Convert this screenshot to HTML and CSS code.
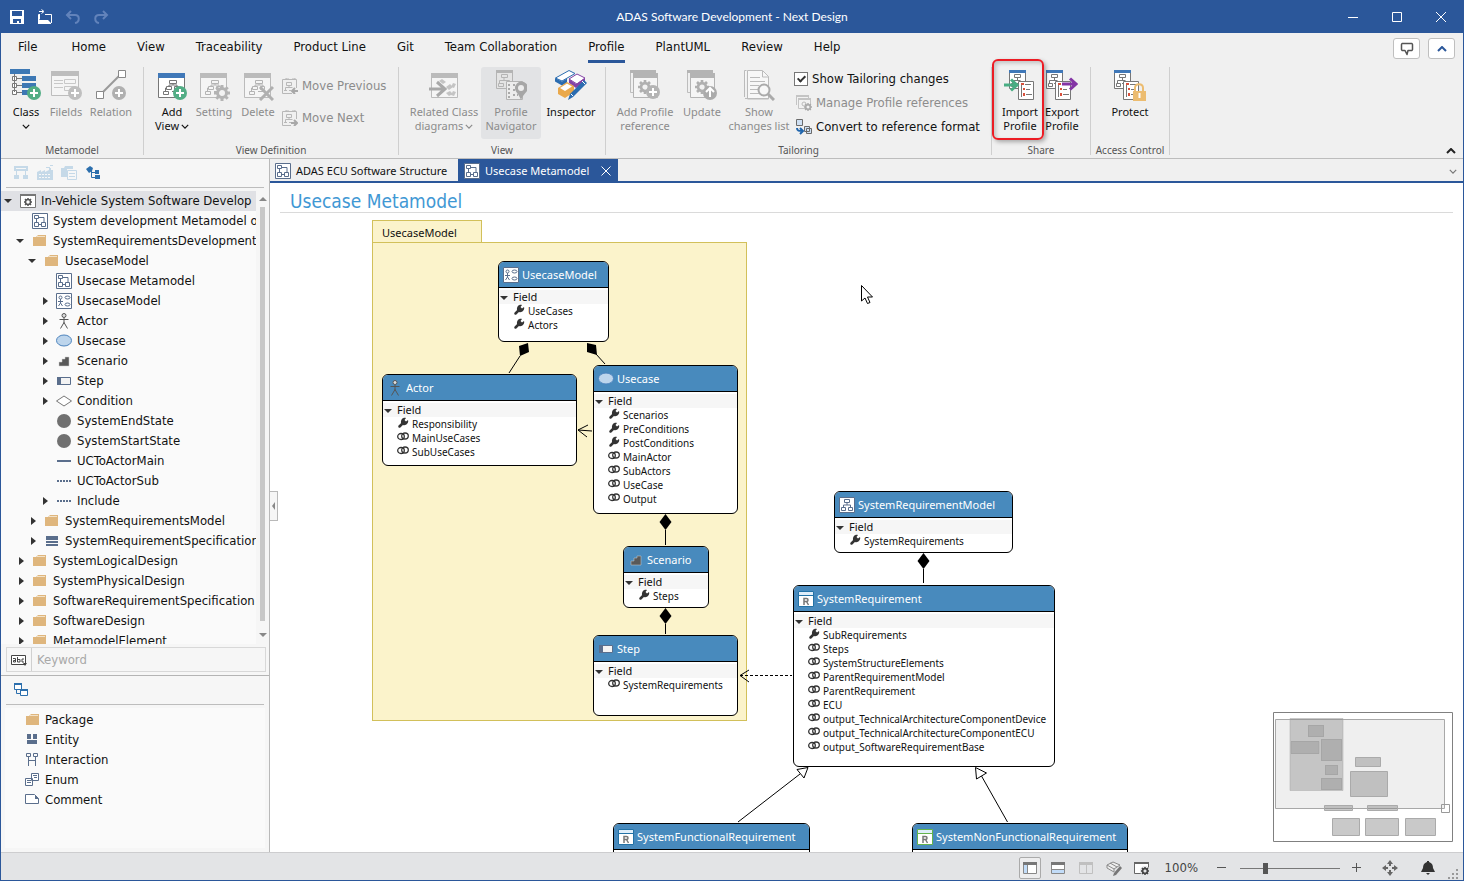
FILE: index.html
```html
<!DOCTYPE html>
<html lang="en">
<head>
<meta charset="utf-8">
<title>ADAS Software Development - Next Design</title>
<link rel="stylesheet" href="styles.css">
</head>
<body>
<svg class="defs" aria-hidden="true">
	<symbol id="save" viewBox="0 0 16 16"><path fill="#fff" fill-rule="evenodd" d="M1 1h14v14H1zM3 2v5h10V2zM4 10v4h4v-2h2v2h2v-4z"/></symbol>
	<symbol id="open" viewBox="0 0 16 16"><path fill="none" stroke="#fff" d="M1.500 6V5.500H3M8 5.500h6.500V14M2 2.500h4M4.500.500l2.500 2-2.500 2"/><path fill="#fff" d="M1 14V9l2 2h8l3 3v1H1zM1 6h2v4H1z"/></symbol>
	<symbol id="undo" viewBox="0 0 16 16"><path fill="none" stroke="#6283bb" stroke-width="2" d="M6 2L2 6l4 4M2 6h8c5 0 5 7 0 8"/></symbol>
	<symbol id="redo" viewBox="0 0 16 16"><path fill="none" stroke="#6283bb" stroke-width="2" d="M10 2l4 4-4 4M14 6H6C1 6 1 13 6 14"/></symbol>
	<symbol id="plus" viewBox="0 0 14 14"><circle cx="7" cy="7" r="7" fill="currentColor"/><path stroke="#fff" stroke-width="2" d="M7 3v8M3 7h8"/></symbol>
	<symbol id="chart" viewBox="0 0 20 16"><path fill="none" stroke="currentColor" d="M8.500 1.500h7v3h-7zM5.500 7.500h5v3h-5zM13.500 7.500h4v3h-4zM2.500 12.500h5v3h-5zM12 4.500V6M8 7.500V6h8v1.500M4.500 12V9H5M11 12.500h6"/></symbol>
	<symbol id="class" viewBox="0 0 32 32"><path fill="#3d78b4" d="M0 0h20v5H0zM12 7h14v5H12zM12 14h14v5H12zM12 21h8v5h-8z"/><path fill="#fff" stroke="#777" d="M4.500 5v18M2.500 7.500h4v4h-4zM2.500 14.500h4v4h-4zM2.500 21.500h4v4h-4zM7 9.500h5M7 16.500h5M7 23.500h5"/><g color="#52ad85"><use href="#plus" x="17" y="17" width="14" height="14"/></g></symbol>
	<symbol id="fields" viewBox="0 0 32 32"><path fill="#f5f5f5" stroke="#bdbdbd" d="M1.500 2.500h27v24h-27z"/><path fill="#bdbdbd" d="M1 2h28v5H1z"/><path fill="none" stroke="#c8c8c8" d="M4 11.500h9M4 18.500h9M4 14.500h9M14.500 10.500h11v4h-11zM14.500 17.500h11v4h-11z"/><g color="#bfbfbf"><use href="#plus" x="18" y="17" width="14" height="14"/></g></symbol>
	<symbol id="relation" viewBox="0 0 32 32"><path stroke="#999" stroke-width="2" d="M5 26L27 4"/><path fill="#fff" stroke="#888" d="M1.500 22.500h7v7h-7zM23.500 1.500h7v7h-7z"/><g color="#b0b0b0"><use href="#plus" x="17" y="17" width="14" height="14"/></g></symbol>
	<symbol id="addview" viewBox="0 0 32 32"><path fill="#fff" stroke="#777" d="M2.500 4.500h26v24h-26z"/><path fill="#4078b8" d="M2 4h27v5H2z"/><g color="#777"><use href="#chart" x="5" y="10" width="20" height="16"/></g><g color="#52ad85"><use href="#plus" x="17" y="17" width="14" height="14"/></g></symbol>
	<symbol id="gear" viewBox="0 0 16 16"><path fill="none" stroke="currentColor" stroke-width="3" d="M8 0v16M0 8h16M2.300 2.300l11.400 11.400M13.700 2.300L2.300 13.700"/><circle cx="8" cy="8" r="4.500" fill="#f2f2f2" stroke="currentColor" stroke-width="3"/></symbol>
	<symbol id="setting" viewBox="0 0 32 32"><path fill="#f5f5f5" stroke="#bbb" d="M2.500 4.500h26v24h-26z"/><path fill="#bbb" d="M2 4h27v5H2z"/><g color="#b4b4b4"><use href="#chart" x="5" y="10" width="20" height="16"/><use href="#gear" x="16" y="16" width="16" height="16"/></g></symbol>
	<symbol id="delete" viewBox="0 0 32 32"><path fill="#f5f5f5" stroke="#bbb" d="M2.500 4.500h26v24h-26z"/><path fill="#bbb" d="M2 4h27v5H2z"/><g color="#b4b4b4"><use href="#chart" x="5" y="10" width="20" height="16"/></g><path stroke="#b0b0b0" stroke-width="3" d="M18 18l13 13M31 18L18 31"/></symbol>
	<symbol id="moveprev" viewBox="0 0 16 16"><path fill="none" stroke="#b8b8b8" d="M10 15.500H.500v-14h14V10M4.500 4.500h5v3h-5zM7 7.500v2M3.500 12v-2.500h7M2 12.500h3M7 12.500h2M4 1V0h3M10 0h3v2"/><path fill="none" stroke="#a8a8a8" stroke-width="2" d="M16 13h-5M13 10l-3 3 3 3"/></symbol>
	<symbol id="movenext" viewBox="0 0 16 16"><path fill="none" stroke="#b8b8b8" d="M9 15.500H.500v-14h14V9M4.500 4.500h5v3h-5zM7 7.500v2M3.500 12v-2.500h7M2 12.500h3M7 12.500h2M4 1V0h3M10 0h3v2"/><path fill="none" stroke="#a8a8a8" stroke-width="2" d="M9 13h5M12 10l3 3-3 3"/></symbol>
	<symbol id="related" viewBox="0 0 32 32"><path fill="#f5f5f5" stroke="#bbb" d="M3.500 4.500h26v24h-26z"/><path fill="#bbb" d="M3 4h27v5H3z"/><path fill="none" stroke="#a9a9a9" stroke-width="3" d="M1 20h15M9 13l8 7-8 7"/><path fill="#c4c4c4" d="M11 12l3-2 4 3-3 2zM18 18l4-3 3 3-4 3zM23 18l2-4 3 1-2 4zM18 24l4-2 3 3-4 2zM23 26l2-4 3 1-2 4z"/></symbol>
	<symbol id="navigator" viewBox="0 0 32 32"><path fill="#e4e4e4" stroke="#b4b4b4" d="M1.500 1.500h16v18h-16z"/><path fill="#b4b4b4" d="M1 1h17v3H1z"/><path fill="none" stroke="#b4b4b4" d="M6.500 5.500h6v3h-6zM9 9v3M4.500 15v-3.500h10V15M3.500 14.500h5v3h-5zM12 14.500h5"/><path fill="#ececec" stroke="#b4b4b4" d="M11.500 12.500h16v18h-16z"/><path stroke="#aaa" stroke-width="2" stroke-dasharray="2 2" d="M14 15v14M18 16h5M18 21h4M18 26h5"/><path fill="#a6a6a6" d="M26 31c-2-6-6-8-6-12a6 6 0 0 1 13 0c0 4-5 6-7 12z"/><circle cx="26" cy="19" r="3" fill="#ececec"/></symbol>
	<symbol id="inspector" viewBox="0 0 32 32"><path fill="#fff" stroke="#2b6cb0" d="M.500 9L14 1.500l6 3L7 12z"/><path fill="#2b6cb0" d="M0 9l7 3.500 5-3v4l-5 3-7-4z"/><path fill="#fff" stroke="#8442a6" d="M14 10l8-5 8 4-8 6z"/><path fill="#8442a6" d="M14 10l7 5v4l-7-5zM21 15l9-6v4l-9 6z"/><path fill="#eaa94c" d="M3 19l9-6 7 4v6l-9 6-7-4z"/><path fill="#fff" d="M5 19l7-4.500 5 3-7 4.500z"/><path fill="#2b6cb0" d="M29 11l3 3-14 14-5 3 2-6z"/><path stroke="#fff" d="M16 25l2 2M27 12l3 3"/></symbol>
	<symbol id="profref" viewBox="0 0 32 32"><path fill="#f0f0f0" stroke="#bdbdbd" d="M1.500 1.500h25v22h-25z"/><path fill="#f5f5f5" stroke="#b4b4b4" d="M4.500 4.500h24v24h-24z"/><path fill="#b4b4b4" d="M1 1h26v3H1zM4 4h25v5H4z"/><g color="#b0b0b0"><use href="#gear" x="9" y="11" width="14" height="14"/></g></symbol>
	<symbol id="addref" viewBox="0 0 32 32"><use href="#profref"/><g color="#b4b4b4"><use href="#plus" x="17" y="16" width="14" height="14"/></g></symbol>
	<symbol id="update" viewBox="0 0 32 32"><use href="#profref"/><circle cx="24" cy="24" r="7" fill="#ababab"/><path fill="none" stroke="#fff" stroke-width="2" d="M24 28v-8M20 23l4-4 4 4"/></symbol>
	<symbol id="changes" viewBox="0 0 32 32"><path fill="#f7f7f7" stroke="#bbb" d="M1.500 28V1.500h2M4.500 1.500h15l6 6V30h-21z"/><path fill="none" stroke="#bbb" d="M19.500 2v6h6M7 8.500h10M7 12.500h15M7 16.500h9M7 20.500h9M7 24.500h9M2 29.500h24"/><circle cx="21" cy="21" r="5.500" fill="#f7f7f7" stroke="#aaa" stroke-width="2"/><path stroke="#aaa" stroke-width="3" d="M25 25l6 6"/></symbol>
	<symbol id="manage" viewBox="0 0 16 16"><path fill="#f2f2f2" stroke="#c4c4c4" d="M.500 10V.500h12V3M2.500 3.500h12v10h-12z"/><path fill="#c4c4c4" d="M0 0h13v2H0zM2 3h13v2H2z"/><circle cx="8" cy="9" r="2" fill="none" stroke="#bbb"/><g color="#aaa"><use href="#gear" x="8" y="8" width="8" height="8"/></g></symbol>
	<symbol id="convert" viewBox="0 0 16 16"><path fill="#cfe0f3" stroke="#6b6b6b" d="M.500.500h6v6h-6zM8.500 7.500h5v5h-5zM10.500 9.500h5v5h-5z"/><path fill="none" stroke="#1f65ad" stroke-width="2" d="M1 9c0 3 2 3 5 3M4 9l3 3-3 3"/></symbol>
	<symbol id="profile" viewBox="0 0 32 32"><g fill="none" stroke="#777"><path fill="#fff" d="M5.500 1.500h16v18h-16z"/><path d="M10.500 5.500h6v3h-6zM13.500 9v3M8.500 15v-3.500h8M7.500 14.500h4v3h-4zM13 14.500h2"/><path fill="#fff" d="M14.500 12.500h15v18h-15z"/><path d="M21 15.500h6M22 20.500h4M22 25.500h6M17.500 14v14"/></g><path fill="#4078b8" d="M5 1h17v3H5z"/><path fill="#d9513c" d="M17 14h3v2h-3zM19 19h2v2h-2zM19 24h2v3h-2z"/></symbol>
	<symbol id="import" viewBox="0 0 32 32"><use href="#profile"/><path fill="none" stroke="#49ad83" stroke-width="3" d="M0 16h12M7 10.500l6 5.500-6 5.500"/></symbol>
	<symbol id="export" viewBox="0 0 32 32"><use href="#profile" x="-5"/><path fill="none" stroke="#8334a5" stroke-width="3" d="M16 15h13M24 9.500l6 5.500-6 5.500"/></symbol>
	<symbol id="protect" viewBox="0 0 32 32"><use href="#profile" x="-5"/><path fill="none" stroke="#ecbc70" stroke-width="2" d="M21 23v-4c0-5 8-5 8 0v4"/><path fill="#ecbc70" d="M19 22h13v10H19z"/><path stroke="#fff" stroke-width="2" d="M25.500 24v5"/></symbol>
	<symbol id="down" viewBox="0 0 10 6"><path fill="none" stroke="currentColor" stroke-width="1.500" d="M1 1l4 4 4-4"/></symbol>
	<symbol id="up" viewBox="0 0 10 6"><path fill="none" stroke="currentColor" stroke-width="2" d="M1 5l4-4 4 4"/></symbol>
	<symbol id="talk" viewBox="0 0 14 14"><path fill="#fff" stroke="#555" stroke-width="1.500" stroke-linejoin="round" d="M2 1.500h10l.5 1v5l-.5 1H8l-1 4-2-4H2l-.5-1v-5z"/></symbol>
	<symbol id="diagram" viewBox="0 0 16 16"><path fill="#fff" stroke="#5a6e8c" d="M.500.500h15v15H.500z"/><path fill="none" stroke="#5a6e8c" d="M2.500 2.500h4v3h-4zM2.500 9.500h4v4h-4zM9.500 9.500h4v4h-4zM4.500 6v4M7 4.500h5v5M7 11.500h3"/></symbol>
	<symbol id="ucmodel" viewBox="0 0 16 16"><path fill="#fff" stroke="#5a6e8c" d="M.500.500h15v15H.500z"/><g fill="none" stroke="#5a6e8c"><circle cx="4.500" cy="4.500" r="1.500"/><path d="M2 8.500h5M4.500 6v4M2.500 13l2-3 2 3"/><ellipse cx="11.500" cy="4.500" rx="2.500" ry="1.500"/><ellipse cx="11.500" cy="11.500" rx="2.500" ry="1.500"/></g></symbol>
	<symbol id="reqmodel" viewBox="0 0 16 16"><path fill="#fff" stroke="#5a6e8c" d="M.500.500h15v15H.500z"/><path fill="none" stroke="#5a6e8c" d="M5.500 2.500h5v3h-5zM2.500 10.500h4v3h-4zM9.500 10.500h4v3h-4zM8 6v2M4.500 10V8h7v2"/></symbol>
	<symbol id="project" viewBox="0 0 16 16"><path fill="#fff" stroke="#777" d="M.500 1.500h15v13H.500z"/><path fill="#777" d="M0 1h16v2H0z"/><circle cx="8" cy="9" r="2.500" fill="none" stroke="#555" stroke-width="1.500"/><path stroke="#555" stroke-width="1.500" d="M8 5v2M8 11v2M4 9h2M10 9h2M5 6l1 1M10 11l1 1M11 6l-1 1M6 11l-1 1"/></symbol>
	<symbol id="folder" viewBox="0 0 16 16"><path fill="#dfb67d" d="M1 4h3l2-2h8v11H1z"/><path stroke="#f3e2c8" d="M5 3.500h8"/></symbol>
	<symbol id="actor" viewBox="0 0 16 16"><g fill="none" stroke="#555"><circle cx="8" cy="2.500" r="2" fill="#ddd"/><path d="M3.500 6.500h9M8 5v5M4.500 15.500L8 9.500l3.500 6"/></g></symbol>
	<symbol id="usecase" viewBox="0 0 16 16"><ellipse cx="8" cy="7.500" rx="7.500" ry="5.500" fill="#bdd5ec" stroke="#4c83bd"/></symbol>
	<symbol id="scenario" viewBox="0 0 16 16"><path fill="#595959" stroke="#ccc" stroke-width=".5" d="M3 13V9h3V6h3V4h4v9z"/></symbol>
	<symbol id="step" viewBox="0 0 16 16"><path fill="#f3f3f3" stroke="#5a6e8c" d="M1.500 4.500h13v7h-13z"/><path fill="#5a6e8c" d="M1 4h4v8H1z"/></symbol>
	<symbol id="condition" viewBox="0 0 16 16"><path fill="#fff" stroke="#777" d="M.500 8L8 3l7.500 5L8 13z"/></symbol>
	<symbol id="state" viewBox="0 0 16 16"><circle cx="8" cy="8" r="7" fill="#707070"/></symbol>
	<symbol id="line" viewBox="0 0 16 16"><path stroke="#5a6e8c" stroke-width="2" d="M1 8h14"/></symbol>
	<symbol id="dots" viewBox="0 0 16 16"><path stroke="#5a6e8c" stroke-width="2" stroke-dasharray="2 1" d="M1 8h14"/></symbol>
	<symbol id="spec" viewBox="0 0 16 16"><path fill="#5a6e8c" d="M2 3h12v4H2zM2 8h12v2H2zM2 11h12v2H2z"/></symbol>
	<symbol id="entity" viewBox="0 0 16 16"><path fill="#5a6e8c" d="M2 2h4v5H2zM8 2h4v5H8zM2 8h10v4H2z"/></symbol>
	<symbol id="interaction" viewBox="0 0 16 16"><path fill="none" stroke="#5a6e8c" d="M1.500 1.500h4v3h-4zM8.500 1.500h4v3h-4zM3.500 5v9M10.500 5v9M4 8.500h6"/></symbol>
	<symbol id="enum" viewBox="0 0 16 16"><path fill="#fff" stroke="#5a6e8c" d="M6.500 1.500h7v7h-7zM.500 6.500h7v7h-7z"/><path stroke="#5a6e8c" d="M8 3.500h4M9 5.500h3M2 8.500h4M2 10.500h4"/></symbol>
	<symbol id="comment" viewBox="0 0 16 16"><path fill="#fff" stroke="#5a6e8c" d="M.500 2.500h9l4 4v5H.500z"/><path fill="#5a6e8c" d="M10 3v4h4z"/></symbol>
	<symbol id="abc" viewBox="0 0 16 16"><path fill="#fff" stroke="#444" d="M.500 3.500h14v9H.500z"/><g fill="none" stroke="#444"><path d="M2 6.500h2.500v3.500H2.500V8.500h2M6.500 5v5H9V7.500H7M13 7h-2v3h2"/></g><path fill="#444" d="M12 11h4l-2 3z"/></symbol>
	<symbol id="req" viewBox="0 0 16 16"><path fill="#fff" stroke="currentColor" d="M.500.500h15v15H.500z"/><path fill="#dfeefa" d="M1 1h14v3H1z"/><path stroke="currentColor" d="M0 4.500h16"/><path fill="none" stroke="#777" stroke-width="1.500" d="M6 14V7.500h2.500c2 0 2 3 0 3H6M8.500 10.500l2 3.500"/></symbol>
	<symbol id="wrench" viewBox="0 0 12 12"><path stroke="#333" stroke-width="2.500" stroke-linecap="round" d="M2.500 9.500l4-4"/><path fill="#333" d="M4 6C3.500 2.500 6 0 9 1L7.500 3 9 4.500 11 3c1 3-2 6-5 5z"/></symbol>
	<symbol id="link" viewBox="0 0 12 12"><g fill="none" stroke="#333" stroke-width="1.300"><ellipse cx="4" cy="5.500" rx="3.300" ry="3"/><ellipse cx="8" cy="5" rx="3.300" ry="3"/></g></symbol>
	<symbol id="t-model" viewBox="0 0 16 16"><path fill="#c5d9e8" d="M1 1h14v5H1zM1 10h5v4H1zM10 10h5v4h-5z"/><path fill="#f7f7f7" d="M3 3h10v1H3z"/><path stroke="#c5d9e8" d="M3.500 6v4M12.500 6v4"/></symbol>
	<symbol id="t-factory" viewBox="0 0 16 16"><path fill="#c5d9e8" d="M0 15V7l4-2v2l4-2v2l4-2V3h2v2h2v10zM9 2h4v1H9zM13 0h3v1h-3z"/><path stroke="#f7f7f7" stroke-dasharray="2 1" d="M2 9.500h12M2 12.500h12"/></symbol>
	<symbol id="t-copy" viewBox="0 0 16 16"><path fill="#c5d9e8" d="M0 3h3l1-2h8v3H6v8H0z"/><path fill="#f7f7f7" stroke="#c5d9e8" d="M6.500 5.500h9v9h-9zM8 8.500h6M8 11.500h6"/></symbol>
	<symbol id="t-tree" viewBox="0 0 16 16"><path fill="#2c6fad" d="M1 4l4-3 3 2-1 3-3 2zM10 5h4v4h-4zM10 10h5v4h-5z"/><path fill="none" stroke="#2c6fad" d="M6.500 5v7.500H11M7 7.500h4"/></symbol>
	<symbol id="t-link" viewBox="0 0 16 16"><path fill="#fff" stroke="#2c6fad" d="M1.500 1.500h7v6h-7zM7.500 7.500h7v6h-7z"/><path fill="none" stroke="#2c6fad" d="M3.500 8v3.500h4"/><path fill="#2c6fad" d="M1 1h8v2H1zM7 7h8v2H7z"/></symbol>
</svg>
<div class="window">
	<header class="titlebar">
		<div class="quick">
			<button aria-label="Save"><svg class="i16"><use href="#save"/></svg></button>
			<button aria-label="Open"><svg class="i16"><use href="#open"/></svg></button>
			<button aria-label="Undo" disabled><svg class="i16"><use href="#undo"/></svg></button>
			<button aria-label="Redo" disabled><svg class="i16"><use href="#redo"/></svg></button>
		</div>
		<h1>ADAS Software Development - Next Design</h1>
		<div class="winbtns">
			<button aria-label="Minimize"><svg width="12" height="12"><path stroke="#fff" d="M1 6.500h10"/></svg></button>
			<button aria-label="Maximize"><svg width="12" height="12"><path fill="none" stroke="#fff" d="M1.500 1.500h9v9h-9z"/></svg></button>
			<button aria-label="Close"><svg width="12" height="12"><path stroke="#fff" d="M1 1l10 10M11 1L1 11"/></svg></button>
		</div>
	</header>

	<nav class="menu">
		<a href="#" class="file">File</a><a href="#">Home</a><a href="#">View</a><a href="#">Traceability</a><a href="#">Product Line</a><a href="#">Git</a><a href="#">Team Collaboration</a><a href="#" class="on">Profile</a><a href="#">PlantUML</a><a href="#">Review</a><a href="#">Help</a>
		<div class="menu-right">
			<button aria-label="Feedback"><svg width="14" height="14"><use href="#talk"/></svg></button>
			<button aria-label="Collapse ribbon"><svg width="10" height="6"><use href="#up"/></svg></button>
		</div>
	</nav>

	<div class="ribbon">
		<section class="group g-meta">
			<div class="tools">
				<button class="tool w40"><svg class="i32"><use href="#class"/></svg>Class<svg class="chev"><use href="#down"/></svg></button>
				<button class="tool w40" disabled><svg class="i32"><use href="#fields"/></svg>Filelds</button>
				<button class="tool w50" disabled><svg class="i32"><use href="#relation"/></svg>Relation</button>
			</div>
			<h2>Metamodel</h2>
		</section>
		<section class="group g-def">
			<div class="tools">
				<button class="tool w40"><svg class="i32"><use href="#addview"/></svg>Add<span>View <svg class="chev"><use href="#down"/></svg></span></button>
				<button class="tool w44" disabled><svg class="i32"><use href="#setting"/></svg>Setting</button>
				<button class="tool w44" disabled><svg class="i32"><use href="#delete"/></svg>Delete</button>
				<div class="stack two">
					<button disabled><svg class="i16"><use href="#moveprev"/></svg>Move Previous</button>
					<button disabled><svg class="i16"><use href="#movenext"/></svg>Move Next</button>
				</div>
			</div>
			<h2>View Definition</h2>
		</section>
		<section class="group g-view">
			<div class="tools">
				<button class="tool w74" disabled><svg class="i32"><use href="#related"/></svg>Related Class<span>diagrams <svg class="chev"><use href="#down"/></svg></span></button>
				<button class="tool w60 pressed" disabled><svg class="i32"><use href="#navigator"/></svg>Profile<span>Navigator</span></button>
				<button class="tool w60"><svg class="i32"><use href="#inspector"/></svg>Inspector</button>
			</div>
			<h2>View</h2>
		</section>
		<section class="group g-tailor">
			<div class="tools">
				<button class="tool w70" disabled><svg class="i32"><use href="#addref"/></svg>Add Profile<span>reference</span></button>
				<button class="tool w44" disabled><svg class="i32"><use href="#update"/></svg>Update</button>
				<button class="tool w70" disabled><svg class="i32"><use href="#changes"/></svg>Show<span>changes list</span></button>
				<div class="stack">
					<label><input type="checkbox" checked>Show Tailoring changes</label>
					<button disabled><svg class="i16"><use href="#manage"/></svg>Manage Profile references</button>
					<button><svg class="i16"><use href="#convert"/></svg>Convert to reference format</button>
				</div>
			</div>
			<h2>Tailoring</h2>
		</section>
		<section class="group g-share">
			<div class="tools">
				<button class="tool w40 marked"><svg class="i32"><use href="#import"/></svg>Import<span>Profile</span></button>
				<button class="tool w40"><svg class="i32"><use href="#export"/></svg>Export<span>Profile</span></button>
			</div>
			<h2>Share</h2>
		</section>
		<section class="group g-access">
			<div class="tools">
				<button class="tool w60"><svg class="i32"><use href="#protect"/></svg>Protect</button>
			</div>
			<h2>Access Control</h2>
		</section>
		<button class="fold" aria-label="Fold ribbon"><svg width="10" height="6"><use href="#up"/></svg></button>
	</div>

	<div class="work">
		<aside class="side">
			<div class="bar">
				<svg class="i16"><use href="#t-model"/></svg><svg class="i16"><use href="#t-factory"/></svg><svg class="i16"><use href="#t-copy"/></svg><svg class="i16"><use href="#t-tree"/></svg>
			</div>
			<div class="treebox">
				<ul class="tree">
					<li class="l0 sel"><i class="open"></i><svg class="i16"><use href="#project"/></svg>In-Vehicle System Software Develop</li>
					<li class="l1"><i></i><svg class="i16"><use href="#diagram"/></svg>System development Metamodel o</li>
					<li class="l1"><i class="open"></i><svg class="i16"><use href="#folder"/></svg>SystemRequirementsDevelopment</li>
					<li class="l2"><i class="open"></i><svg class="i16"><use href="#folder"/></svg>UsecaseModel</li>
					<li class="l3"><i></i><svg class="i16"><use href="#diagram"/></svg>Usecase Metamodel</li>
					<li class="l3"><i class="shut"></i><svg class="i16"><use href="#ucmodel"/></svg>UsecaseModel</li>
					<li class="l3"><i class="shut"></i><svg class="i16"><use href="#actor"/></svg>Actor</li>
					<li class="l3"><i class="shut"></i><svg class="i16"><use href="#usecase"/></svg>Usecase</li>
					<li class="l3"><i class="shut"></i><svg class="i16"><use href="#scenario"/></svg>Scenario</li>
					<li class="l3"><i class="shut"></i><svg class="i16"><use href="#step"/></svg>Step</li>
					<li class="l3"><i class="shut"></i><svg class="i16"><use href="#condition"/></svg>Condition</li>
					<li class="l3"><i></i><svg class="i16"><use href="#state"/></svg>SystemEndState</li>
					<li class="l3"><i></i><svg class="i16"><use href="#state"/></svg>SystemStartState</li>
					<li class="l3"><i></i><svg class="i16"><use href="#line"/></svg>UCToActorMain</li>
					<li class="l3"><i></i><svg class="i16"><use href="#dots"/></svg>UCToActorSub</li>
					<li class="l3"><i class="shut"></i><svg class="i16"><use href="#dots"/></svg>Include</li>
					<li class="l2"><i class="shut"></i><svg class="i16"><use href="#folder"/></svg>SystemRequirementsModel</li>
					<li class="l2"><i class="shut"></i><svg class="i16"><use href="#spec"/></svg>SystemRequirementSpecification</li>
					<li class="l1"><i class="shut"></i><svg class="i16"><use href="#folder"/></svg>SystemLogicalDesign</li>
					<li class="l1"><i class="shut"></i><svg class="i16"><use href="#folder"/></svg>SystemPhysicalDesign</li>
					<li class="l1"><i class="shut"></i><svg class="i16"><use href="#folder"/></svg>SoftwareRequirementSpecification</li>
					<li class="l1"><i class="shut"></i><svg class="i16"><use href="#folder"/></svg>SoftwareDesign</li>
					<li class="l1"><i class="shut"></i><svg class="i16"><use href="#folder"/></svg>MetamodelElement</li>
				</ul>
				<div class="scroll"><i class="s-up"></i><b></b><i class="s-down"></i></div>
			</div>
			<div class="search">
				<svg class="i16"><use href="#abc"/></svg>
				<input type="text" placeholder="Keyword" aria-label="Keyword">
			</div>
			<div class="palette">
				<div class="bar"><svg class="i16"><use href="#t-link"/></svg></div>
				<ul>
					<li><svg class="i16"><use href="#folder"/></svg>Package</li>
					<li><svg class="i16"><use href="#entity"/></svg>Entity</li>
					<li><svg class="i16"><use href="#interaction"/></svg>Interaction</li>
					<li><svg class="i16"><use href="#enum"/></svg>Enum</li>
					<li><svg class="i16"><use href="#comment"/></svg>Comment</li>
				</ul>
			</div>
		</aside>

		<main class="main">
			<div class="tabs">
				<button><svg class="i16"><use href="#diagram"/></svg>ADAS ECU Software Structure</button>
				<button class="on"><svg class="i16"><use href="#diagram"/></svg>Usecase Metamodel<svg class="x" width="10" height="10"><path stroke="#fff" d="M.500.500l9 9M9.500.500l-9 9"/></svg></button>
				<svg class="more"><use href="#down"/></svg>
			</div>
			<h2 class="title">Usecase Metamodel</h2>
			<div class="canvas">
				<div class="pkg-tab">UsecaseModel</div>
				<div class="pkg"></div>

				<svg class="edges">
					<path d="M258 130l-9 3 1 10 9-4zM317 130l9 2 1 10-10-3zM395.500 301l6 8-6 8-6-8zM395.500 395l6 8-6 8-6-8zM653.500 340l6 8-6 8-6-8z"/>
					<g fill="none" stroke="#000">
						<path d="M250 143l-11 17M326 141l9 10M395.500 317v15M395.500 411v10M653.500 356v14"/>
						<path d="M322 218l-14-1M318 212l-10 5 9 7"/>
						<path stroke-dasharray="3 2" d="M470 462.500h52"/><path d="M479 457l-9 5.500 9 6.500"/>
						<path d="M530 561l-62 48M711.500 563l26 46"/>
						<path fill="#fff" d="M538 554.500l-11 2 7 8.500zM705.500 554.500l11 5.500-10 6z"/>
					</g>
				</svg>

				<div class="node n-model">
					<h3><svg class="i16"><use href="#ucmodel"/></svg>UsecaseModel</h3>
					<h4>Field</h4>
					<ul>
						<li><svg class="i12"><use href="#wrench"/></svg>UseCases</li>
						<li><svg class="i12"><use href="#wrench"/></svg>Actors</li>
					</ul>
				</div>
				<div class="node n-actor">
					<h3><svg class="i16"><use href="#actor"/></svg>Actor</h3>
					<h4>Field</h4>
					<ul>
						<li><svg class="i12"><use href="#wrench"/></svg>Responsibility</li>
						<li><svg class="i12"><use href="#link"/></svg>MainUseCases</li>
						<li><svg class="i12"><use href="#link"/></svg>SubUseCases</li>
					</ul>
				</div>
				<div class="node n-usecase">
					<h3><svg class="i16"><use href="#usecase"/></svg>Usecase</h3>
					<h4>Field</h4>
					<ul>
						<li><svg class="i12"><use href="#wrench"/></svg>Scenarios</li>
						<li><svg class="i12"><use href="#wrench"/></svg>PreConditions</li>
						<li><svg class="i12"><use href="#wrench"/></svg>PostConditions</li>
						<li><svg class="i12"><use href="#link"/></svg>MainActor</li>
						<li><svg class="i12"><use href="#link"/></svg>SubActors</li>
						<li><svg class="i12"><use href="#link"/></svg>UseCase</li>
						<li><svg class="i12"><use href="#link"/></svg>Output</li>
					</ul>
				</div>
				<div class="node n-scenario">
					<h3><svg class="i16"><use href="#scenario"/></svg>Scenario</h3>
					<h4>Field</h4>
					<ul>
						<li><svg class="i12"><use href="#wrench"/></svg>Steps</li>
					</ul>
				</div>
				<div class="node n-step">
					<h3><svg class="i16"><use href="#step"/></svg>Step</h3>
					<h4>Field</h4>
					<ul>
						<li><svg class="i12"><use href="#link"/></svg>SystemRequirements</li>
					</ul>
				</div>
				<div class="node n-reqmodel">
					<h3><svg class="i16"><use href="#reqmodel"/></svg>SystemRequirementModel</h3>
					<h4>Field</h4>
					<ul>
						<li><svg class="i12"><use href="#wrench"/></svg>SystemRequirements</li>
					</ul>
				</div>
				<div class="node n-req">
					<h3><svg class="i16 blue"><use href="#req"/></svg>SystemRequirement</h3>
					<h4>Field</h4>
					<ul>
						<li><svg class="i12"><use href="#wrench"/></svg>SubRequirements</li>
						<li><svg class="i12"><use href="#link"/></svg>Steps</li>
						<li><svg class="i12"><use href="#link"/></svg>SystemStructureElements</li>
						<li><svg class="i12"><use href="#link"/></svg>ParentRequirementModel</li>
						<li><svg class="i12"><use href="#link"/></svg>ParentRequirement</li>
						<li><svg class="i12"><use href="#link"/></svg>ECU</li>
						<li><svg class="i12"><use href="#link"/></svg>output_TechnicalArchitectureComponentDevice</li>
						<li><svg class="i12"><use href="#link"/></svg>output_TechnicalArchitectureComponentECU</li>
						<li><svg class="i12"><use href="#link"/></svg>output_SoftwareRequirementBase</li>
					</ul>
				</div>
				<div class="node n-func"><h3><svg class="i16 blue"><use href="#req"/></svg>SystemFunctionalRequirement</h3></div>
				<div class="node n-nonfunc"><h3><svg class="i16 green"><use href="#req"/></svg>SystemNonFunctionalRequirement</h3></div>

				<svg class="cursor" width="12" height="19"><path fill="#fff" stroke="#000" d="M.500.500v15.500l3.500-3 2.500 5.500 2.500-1-2.500-5.500h5z"/></svg>

				<svg class="minimap" width="180" height="130">
					<path fill="#fff" stroke="#808080" d="M.500.500h179v129H.500z"/>
					<path fill="#efefef" stroke="#a8a8a8" d="M2.500 7.500h169v89H2.500z"/>
					<path fill="#888" fill-opacity=".4" stroke="#aaa" stroke-opacity=".5" d="M17 6.500h53v72H17zM35.500 13.500h15v11h-15zM18 29.500h28v12H18zM48.500 27.500h20v21h-20zM52.500 53.500h12v9h-12zM48.500 66.500h20v11h-20z"/>
					<path fill="#888" fill-opacity=".35" d="M35 13h16v12H35zM18 29h28v13H18zM48 27h21v22H48zM52 53h13v10H52zM48 66h21v12H48z"/>
					<path fill="#888" fill-opacity=".45" stroke="#aaa" d="M82.500 45.500h25v9h-25zM77.500 59.500h37v25h-37zM51.500 93.500h28v5h-28zM94.500 93.500h30v5h-30zM59.500 106.500h27v17h-27zM92.500 106.500h33v17h-33zM132.500 106.500h30v17h-30z"/>
					<path fill="none" stroke="#999" d="M168.500 92.500h8v8h-8z"/>
				</svg>
			</div>
			<button class="splitter" aria-label="Hide panel"></button>
		</main>
	</div>

	<footer class="status">
		<button class="pressed" aria-label="Side panel"><svg class="i16"><path fill="#fff" stroke="#888" d="M1.500 2.500h13v11h-13z"/><path fill="#777" d="M1 2h14v3H1z"/><path fill="#c2dcf8" d="M2 5h3v8H2z"/><path stroke="#888" d="M5.500 5v8"/></svg></button>
		<button aria-label="Bottom panel"><svg class="i16"><path fill="#fff" stroke="#888" d="M1.500 2.500h13v11h-13z"/><path fill="#777" d="M1 2h14v3H1z"/><path fill="#c2dcf8" d="M2 10h12v3H2z"/><path stroke="#888" d="M2 9.500h12"/></svg></button>
		<button aria-label="Split" disabled><svg class="i16"><path fill="none" stroke="#c0c0c0" d="M1.500 2.500h13v11h-13zM8.500 3v11"/><path fill="#c0c0c0" d="M1 2h14v3H1z"/></svg></button>
		<button aria-label="Inspector"><svg class="i16"><path fill="#eee" stroke="#8a8a8a" d="M1 5l6-3 7 3-6 4zM1 5v3l7 4V9M4 3l7 4"/><path fill="#777" d="M14 6l2 2-6 7-3 1 1-3z"/></svg></button>
		<button aria-label="Window settings"><svg class="i16"><path fill="#fff" stroke="#666" d="M.500 2.500h14v11H.500z"/><path fill="#666" d="M0 2h15v2H0z"/><circle cx="11" cy="11" r="5" fill="#e3e4e6"/><circle cx="11" cy="11" r="2.500" fill="none" stroke="#444" stroke-width="1.500"/><path stroke="#444" stroke-width="1.500" d="M11 7v2M11 13v2M7 11h2M13 11h2M8 8l2 2M12 12l2 2M14 8l-2 2M10 12l-2 2"/></svg></button>
		<span class="zoom">100%</span>
		<button aria-label="Zoom out"><svg class="i16"><path stroke="#555" d="M3 7.500h9"/></svg></button>
		<input type="range" min="0" max="100" value="24" aria-label="Zoom">
		<button aria-label="Zoom in"><svg class="i16"><path stroke="#555" d="M3 7.500h9M7.500 3v9"/></svg></button>
		<button class="fit" aria-label="Fit"><svg class="i16"><path fill="#666" d="M8 0l3 4H5zM8 16l3-4H5zM0 8l4-3v6zM16 8l-4-3v6z"/><path fill="none" stroke="#666" stroke-width="2" d="M8 3v3M8 10v3M3 8h3M10 8h3"/></svg></button>
		<button class="bell" aria-label="Notifications"><svg class="i16"><path fill="#333" d="M7 1h2v1c3 1 4 3 4 6l2 4H1l2-4c0-3 1-5 4-6zM6 13h4l-2 2z"/></svg></button>
		<svg class="grip" width="12" height="12"><path fill="#999" d="M9 1h2v2H9zM9 5h2v2H9zM5 5h2v2H5zM9 9h2v2H9zM5 9h2v2H5zM1 9h2v2H1z"/></svg>
	</footer>
</div>
</body>
</html>
```
FILE: styles.css
```css
* {margin:0;padding:0;list-style:none;box-sizing:border-box;}
body {font:13px/20px "DejaVu Sans Condensed","DejaVu Sans",sans-serif;color:#111;}
button {font:inherit;color:inherit;background:none;border:0;}
a {color:inherit;text-decoration:none;}
svg {display:block;flex:none;}
.defs {position:absolute;width:0;height:0;}
.i12 {width:12px;height:12px;}
.i16 {width:16px;height:16px;}
.i32 {width:32px;height:32px;}

.window {display:flex;flex-direction:column;height:100vh;border:1px solid #2b579a;border-top:0;background:#f0f0f0;overflow:hidden;}

/* title bar */
.titlebar {display:grid;grid-template-columns:1fr auto 1fr;align-items:center;height:33px;flex:none;background:#2b579a;color:#fff;}
.titlebar h1 {font:12px/20px Lato,sans-serif;}
.quick {display:flex;gap:12px;padding-left:8px;}
.winbtns {display:flex;justify-content:flex-end;}
.winbtns button {display:flex;justify-content:center;width:44px;}

/* menu */
.menu {display:flex;align-items:center;gap:1px;height:31px;flex:none;padding:0 8px 0 2px;}
.menu a {padding:3px 0;margin:0 15px;border-bottom:3px solid transparent;}
.menu a.file {margin-right:18px;}
.menu a.on {border-color:#2b579a;}
.menu-right {display:flex;gap:8px;margin-left:auto;}
.menu-right button {display:flex;align-items:center;justify-content:center;width:27px;height:21px;background:#fff;border:1px solid #bfbfbf;border-radius:3px;color:#2b579a;}

/* ribbon */
.ribbon {position:relative;display:flex;height:95px;flex:none;padding:3px 0;border-bottom:1px solid #bdbdbd;font:11px/14px "Noto Sans",sans-serif;}
.group {display:flex;flex-direction:column;flex:none;border-right:1px solid #cfcfcf;}
.group h2 {margin-top:auto;font-size:10px;line-height:10px;font-weight:400;text-align:center;color:#555;}
.tools {display:flex;height:72px;}
.g-meta {width:143px;}
.g-meta .tools {padding-left:5px;}
.g-def {width:255px;}
.g-def .tools {padding-left:8px;}
.g-view {width:207px;}
.g-view .tools {padding-left:8px;}
.g-tailor {width:386px;}
.g-tailor .tools {padding-left:4px;}
.g-share {width:99px;}
.g-share .tools {padding-left:8px;gap:2px;}
.g-access {width:79px;}
.g-access .tools {padding-left:9px;}
.tool {position:relative;display:flex;flex-direction:column;align-items:center;justify-content:flex-start;height:72px;padding-top:2px;white-space:nowrap;}
.tool .i32 {margin-bottom:4px;}
.tool .chev {margin-top:5px;}
.tool span {display:flex;align-items:center;gap:2px;}
.tool span .chev {margin:0;}
.chev {width:8px;height:5px;}
.w40 {width:40px;}
.w44 {width:44px;}
.w50 {width:50px;}
.w60 {width:60px;}
.w70 {width:70px;}
.w74 {width:74px;}
.ribbon button:disabled {color:#8c8c8c;}
.ribbon .pressed {background:#e2e3e5;border-radius:3px;}
.marked::after {content:"";position:absolute;left:-8px;top:-8px;width:48px;height:77px;border:2px solid #ec1c24;border-radius:6px;box-shadow:2px 2px 4px rgba(0,0,0,.3), inset 2px 2px 4px rgba(0,0,0,.2);z-index:2;}
.stack {display:flex;flex-direction:column;font:13px/24px "DejaVu Sans Condensed","DejaVu Sans",sans-serif;}
.stack button,.stack label {display:flex;align-items:center;gap:4px;white-space:nowrap;}
.stack button {padding-left:2px;}
.stack.two {line-height:32px;padding-top:3px;}
.stack input {appearance:none;width:14px;height:14px;border:1px solid #777;background:#fff;position:relative;}
.stack input:checked::after {content:"";position:absolute;left:4px;top:1px;width:3px;height:6px;border:solid #333;border-width:0 2px 2px 0;transform:rotate(45deg);}
.fold {position:absolute;right:7px;bottom:4px;color:#222;}

/* work area */
.work {display:flex;flex:1;min-height:0;}
.side {display:flex;flex-direction:column;width:269px;flex:none;background:#f6f6f6;border-right:1px solid #b9b9b9;}
.bar {display:flex;align-items:center;gap:8px;height:29px;flex:none;margin:0 5px 3px;padding-left:7px;border-bottom:1px solid #bdbdbd;}
.treebox {display:flex;flex:1;min-height:0;overflow:hidden;}
.tree {flex:1;min-width:0;overflow:hidden;background:#fafafa;}
.tree li {display:flex;align-items:center;height:20px;white-space:nowrap;}
.tree svg {margin:0 5px 0 4px;}
.tree i {width:15px;flex:none;}
.tree i::before {content:"";display:block;width:0;margin-left:3px;border:4px solid transparent;}
.tree i.open::before {border-top-color:#333;border-bottom-width:0;}
.tree i.shut::before {margin-left:6px;border-left:5px solid #333;border-right-width:0;}
.l0.sel {background:#e0e1e5;}
.l1 {padding-left:12px;}
.l2 {padding-left:24px;}
.l3 {padding-left:36px;}
.scroll {display:flex;flex-direction:column;align-items:center;justify-content:space-between;width:13px;padding:6px 0 7px;}
.scroll b {width:5px;flex:1;margin:6px 0 12px;background:#c8c8c8;}
.scroll i {border:4px solid transparent;}
.scroll .s-up {border-top-width:0;border-bottom-color:#888;}
.scroll .s-down {border-bottom-width:0;border-top-color:#888;}
.search {display:flex;align-items:center;height:25px;flex:none;margin:3px 3px 3px 5px;padding-left:4px;border:1px solid #d8d8d8;}
.search input {flex:1;min-width:0;height:23px;margin-left:4px;padding-left:5px;font:inherit;border:0;border-left:1px solid #d0d0d0;background:none;outline:0;}
.search input::placeholder {color:#a8a8a8;opacity:1;}
.palette {height:177px;flex:none;border-top:1px solid #b4b4b4;}
.palette ul {height:140px;margin:0 4px;padding-top:2px;background:#fafafa;}
.palette li {display:flex;align-items:center;gap:4px;height:20px;padding-left:20px;}

.main {position:relative;display:flex;flex-direction:column;flex:1;min-width:0;background:#fff;}
.tabs {display:flex;height:24px;flex:none;background:#f0f0f0;border-bottom:2px solid #2b579a;font:11px/22px "Noto Sans",sans-serif;}
.tabs button {display:flex;align-items:center;gap:5px;width:188px;padding:2px 0 0 5px;}
.tabs button.on {width:160px;padding:2px 7px 0 6px;background:#2b579a;color:#fff;}
.tabs .x {margin-left:auto;}
.more {width:8px;height:5px;margin:10px 6px 0 auto;color:#777;}
.title {flex:none;height:30px;margin:0 10px;padding-left:10px;font-size:19px;line-height:36px;font-weight:400;color:#3f98d4;border-bottom:1px solid #dadada;}

/* diagram */
.canvas {position:relative;flex:1;min-height:0;overflow:hidden;font:11px/14px "Noto Sans",sans-serif;}
.pkg-tab,.pkg {position:absolute;left:102px;background:#fbf3cb;border:1px solid #d2c05a;}
.pkg-tab {top:7px;width:110px;height:23px;padding-left:9px;line-height:23px;}
.pkg {top:29px;width:375px;height:479px;}
.edges {position:absolute;left:0;top:0;width:100%;height:100%;}
.node {position:absolute;background:#fff;border:1px solid #000;border-radius:6px;overflow:hidden;}
.node h3 {display:flex;align-items:center;gap:3px;height:26px;padding:1px 0 0 4px;font-size:11px;font-weight:400;color:#fff;background:#488abd;border-bottom:1px solid #000;white-space:nowrap;}
.node h4 {position:relative;height:14px;margin-top:2px;padding-left:14px;font-size:11px;font-weight:400;line-height:13px;background:#f6f6f6;}
.node h4::before {content:"";position:absolute;left:1px;top:6px;border:4px solid transparent;border-top-color:#333;border-bottom-width:0;}
.node li {display:flex;gap:3px;padding-left:14px;height:14px;font-size:10px;line-height:15px;white-space:nowrap;}
.blue {color:#2372a6;}
.green {color:#63b34d;}
.n-model {left:228px;top:48px;width:111px;height:81px;}
.n-actor {left:112px;top:161px;width:195px;height:92px;}
.n-usecase {left:323px;top:152px;width:145px;height:149px;}
.n-scenario {left:353px;top:333px;width:86px;height:62px;}
.n-step {left:323px;top:422px;width:145px;height:81px;}
.n-reqmodel {left:564px;top:278px;width:179px;height:62px;}
.n-req {left:523px;top:372px;width:262px;height:182px;}
.n-func {left:343px;top:610px;width:197px;height:80px;}
.n-nonfunc {left:642px;top:610px;width:216px;height:80px;}
.cursor {position:absolute;left:591px;top:72px;}
.minimap {position:absolute;right:10px;bottom:10px;}
.splitter {position:absolute;left:-1px;top:332px;width:9px;height:30px;background:#f6f6f6;border:1px solid #b9b9b9;}
.splitter::before {content:"";display:block;width:0;margin-left:2px;border:4px solid transparent;border-left-width:0;border-right:3px solid #888;}

/* status bar */
.status {display:flex;align-items:center;justify-content:flex-end;height:28px;flex:none;padding:3px 4px 0 0;background:#e3e4e6;border-top:1px solid #cdcdcf;}
.status button {display:flex;align-items:center;justify-content:center;width:22px;height:22px;margin-right:6px;}
.status .pressed {background:#ededee;border:1px solid #aaa;border-radius:2px;}
.zoom {margin:0 13px 0 6px;color:#444;}
.status input {appearance:none;width:100px;height:16px;margin:0 6px 0 1px;background:linear-gradient(#777,#777) center/100% 1px no-repeat;}
.status input::-webkit-slider-thumb {appearance:none;width:5px;height:11px;background:#555;}
.status .fit {margin-left:5px;}
.status .bell {margin:0 8px 0 10px;}
.grip {align-self:flex-end;}
```
